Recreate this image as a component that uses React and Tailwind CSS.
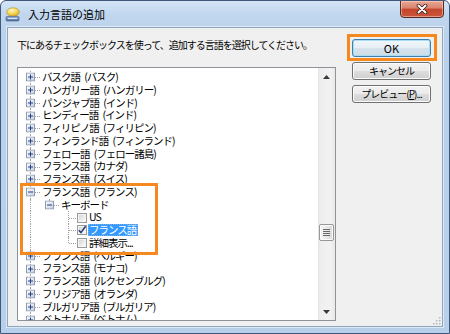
import React from "react";

const rows = [
  { t: "バスク語 (バスク)", cells: [["tee", "+"]] },
  { t: "ハンガリー語 (ハンガリー)", cells: [["tee", "+"]] },
  { t: "パンジャブ語 (インド)", cells: [["tee", "+"]] },
  { t: "ヒンディー語 (インド)", cells: [["tee", "+"]] },
  { t: "フィリピノ語 (フィリピン)", cells: [["tee", "+"]] },
  { t: "フィンランド語 (フィンランド)", cells: [["tee", "+"]] },
  { t: "フェロー語 (フェロー諸島)", cells: [["tee", "+"]] },
  { t: "フランス語 (カナダ)", cells: [["tee", "+"]] },
  { t: "フランス語 (スイス)", cells: [["tee", "+"]] },
  { t: "フランス語 (フランス)", cells: [["tee", "-"]] },
  { t: "キーボード", cells: [["full"], ["ell", "-"]] },
  { t: "US", cells: [["full"], ["none"], ["tee"]], check: false },
  { t: "フランス語", cells: [["full"], ["none"], ["tee"]], check: true, selected: true },
  { t: "詳細表示...", cells: [["full"], ["none"], ["ell"]], check: false },
  { t: "フランス語 (ベルギー)", cells: [["tee", "+"]] },
  { t: "フランス語 (モナコ)", cells: [["tee", "+"]] },
  { t: "フランス語 (ルクセンブルグ)", cells: [["tee", "+"]] },
  { t: "フリジア語 (オランダ)", cells: [["tee", "+"]] },
  { t: "ブルガリア語 (ブルガリア)", cells: [["tee", "+"]] },
  { t: "ベトナム語 (ベトナム)", cells: [["tee", "+"]] },
];

function Expander({ sign }) {
  return (
    <svg width="9" height="9" viewBox="0 0 9 9" className="absolute left-[5px] top-1/2 -translate-y-1/2">
      <defs>
        <linearGradient id="exg" x1="0" y1="0" x2="1" y2="1">
          <stop offset="0" stopColor="#ffffff" />
          <stop offset="1" stopColor="#c4cfdd" />
        </linearGradient>
      </defs>
      <rect x="0.5" y="0.5" width="8" height="8" fill="url(#exg)" stroke="#8d9bb0" />
      <rect x="2" y="4" width="5" height="1" fill="#23418a" />
      {sign === "+" && <rect x="4" y="2" width="1" height="5" fill="#23418a" />}
    </svg>
  );
}

function Cell({ kind, exp }) {
  return (
    <div className="relative w-[19px] h-full shrink-0">
      {(kind === "full" || kind === "tee") && (
        <div className="absolute left-[9px] top-0 bottom-0 border-l border-dotted border-[#a0a0a0]" />
      )}
      {kind === "ell" && (
        <div className="absolute left-[9px] top-0 h-1/2 border-l border-dotted border-[#a0a0a0]" />
      )}
      {(kind === "tee" || kind === "ell") && (
        <div className="absolute left-[10px] right-0 top-1/2 border-t border-dotted border-[#a0a0a0]" />
      )}
      {exp && <Expander sign={exp} />}
    </div>
  );
}

function CheckBox({ checked }) {
  return (
    <svg width="10" height="10" viewBox="0 0 10 10" className="shrink-0 -ml-[1px]">
      <defs>
        <linearGradient id="cbg" x1="0" y1="0" x2="1" y2="1">
          <stop offset="0" stopColor="#d6d6d6" />
          <stop offset="1" stopColor="#fbfbfb" />
        </linearGradient>
      </defs>
      <rect x="0.5" y="0.5" width="9" height="9" fill="#f4f4f4" stroke="#9a9b9b" />
      <rect x="2" y="2" width="6" height="6" fill="url(#cbg)" />
      {checked && (
        <path d="M1.8 5.2 L4 7.6 L8.6 1.2" fill="none" stroke="#253f7e" strokeWidth="1.6" />
      )}
    </svg>
  );
}

function TreeRow({ row }) {
  const hasCheck = row.check !== undefined;
  // en space keeps the gap before the bracket visible under the tight tracking
  const label = row.t.replace(" (", "\u2002(");
  return (
    <div className="flex items-center h-[12.75px] shrink-0 whitespace-nowrap">
      {row.cells.map((c, i) => (
        <Cell key={i} kind={c[0]} exp={c[1]} />
      ))}
      {hasCheck && <CheckBox checked={row.check} />}
      <span
        className={
          row.selected
            ? "ml-[1px] pl-[1px] pr-[2px] h-[12px] flex items-center bg-[#3399ff] text-white outline-1 outline-dotted outline-[#7fb0e0] -outline-offset-1"
            : "ml-[2px] text-black"
        }
      >
        {label}
      </span>
    </div>
  );
}

function Button({ children, primary }) {
  return (
    <div
      className={
        "h-[18px] w-full rounded-[3px] border flex items-center justify-center text-[10px] tracking-[-1px] leading-none text-black " +
        (primary
          ? "border-[#3c7fb1] bg-[linear-gradient(to_bottom,#f1f8fc,#e5eef5_50%,#d6e2ec_51%,#cfdde8)] shadow-[inset_0_0_0_1px_#a8dcf4]"
          : "border-[#707070] bg-[linear-gradient(to_bottom,#f2f2f2,#ebebeb_50%,#dddddd_51%,#cfcfcf)] shadow-[inset_0_0_0_1px_#fcfcfc]")
      }
    >
      {children}
    </div>
  );
}

function Scrollbar() {
  return (
    <div className="w-[17px] h-full flex flex-col shrink-0 bg-[linear-gradient(to_right,#e2e2e2,#eeeeee_2px,#f2f2f2_12px,#e9e9e9)]">
      <div className="h-[17px] flex items-center justify-center">
        <svg width="7" height="4" viewBox="0 0 7 4">
          <path d="M0 4 L3.5 0 L7 4 Z" fill="#3a3a3a" />
        </svg>
      </div>
      <div className="flex-1 flex flex-col items-center">
        <div className="mt-[139px] w-[15px] h-[17px] rounded-[2px] border border-[#979797] bg-[linear-gradient(to_right,#f6f6f6,#e6e6e6_60%,#d8d8d8)] shadow-[inset_0_0_0_1px_#fdfdfd] flex flex-col items-center justify-center gap-[1px]">
          {[0, 1, 2, 3].map((i) => (
            <div key={i} className="w-[7px] h-px bg-[#6b6b6b]" />
          ))}
        </div>
      </div>
      <div className="h-[17px] flex items-center justify-center">
        <svg width="7" height="4" viewBox="0 0 7 4">
          <path d="M0 0 L7 0 L3.5 4 Z" fill="#3a3a3a" />
        </svg>
      </div>
    </div>
  );
}

function TitleIcon() {
  return (
    <svg width="15" height="15" viewBox="0 0 15 15">
      <defs>
        <radialGradient id="bub" cx="0.4" cy="0.3" r="0.8">
          <stop offset="0" stopColor="#fff7c2" />
          <stop offset="0.6" stopColor="#f2cf4a" />
          <stop offset="1" stopColor="#c99a17" />
        </radialGradient>
        <linearGradient id="kb" x1="0" y1="0" x2="0" y2="1">
          <stop offset="0" stopColor="#9db5d6" />
          <stop offset="1" stopColor="#4d6f9f" />
        </linearGradient>
      </defs>
      <ellipse cx="8" cy="5" rx="6.3" ry="4.2" fill="url(#bub)" stroke="#b58a1a" strokeWidth="0.6" />
      <rect x="1" y="9.5" width="13" height="4.5" rx="1" fill="url(#kb)" stroke="#3f5d88" strokeWidth="0.6" />
      <rect x="3" y="11" width="9" height="1" fill="#dce7f5" />
    </svg>
  );
}

export default function App() {
  return (
    <div className="w-[450px] h-[334px] bg-white font-['Noto_Sans_CJK_JP',sans-serif]">
      <div className="relative w-full h-full flex flex-col rounded-t-[6px] border border-[#40597a] bg-[linear-gradient(to_bottom,#d4e4f5,#c0d6ee_14px,#b9d1ea_40px,#b7cfe9)] overflow-hidden">
        {/* title bar */}
        <div className="h-[26px] flex items-center shrink-0">
          <div className="ml-[4px] mt-[1px]">
            <TitleIcon />
          </div>
          <span className="ml-[8px] text-[11px] leading-none text-black">入力言語の追加</span>
          <div className="ml-auto mr-[5px] self-start -mt-[1px] w-[44px] h-[18px] rounded-b-[4px] border border-[#5a2a22] bg-[linear-gradient(to_bottom,#e8a796,#d8826c_45%,#c4452c_50%,#c9563a)] shadow-[inset_0_0_0_1px_rgba(255,220,210,0.5)] flex items-center justify-center">
            <svg width="12" height="10" viewBox="0 0 12 10">
              <path d="M2.5 1.5 L9.5 8.5 M9.5 1.5 L2.5 8.5" stroke="#3a1d17" strokeWidth="3.6" strokeLinecap="round" />
              <path d="M2.5 1.5 L9.5 8.5 M9.5 1.5 L2.5 8.5" stroke="#ffffff" strokeWidth="2" strokeLinecap="round" />
            </svg>
          </div>
        </div>

        {/* client area */}
        <div className="ml-[6px] mr-[6px] h-[300px] shrink-0 border border-[#8fa5bf] shadow-[0_0_0_1px_rgba(235,243,252,0.7)] bg-[#f0f0f0] flex relative">
          <div className="pl-[9px] pt-[10px] flex flex-col">
            <div className="h-[14px] flex items-center text-[10px] tracking-[-1px] leading-none text-black whitespace-nowrap">
              下にあるチェックボックスを使って、追加する言語を選択してください。
            </div>
            <div className="mt-[15px] w-[319px] h-[254px] border border-[#8f9399] bg-white flex">
              <div className="flex-1 pl-[3px] pt-[3px] overflow-hidden flex flex-col text-[10.5px] tracking-[-1px] leading-none">
                {rows.map((r, i) => (
                  <TreeRow key={i} row={r} />
                ))}
              </div>
              <Scrollbar />
            </div>
          </div>

          <div className="ml-[16px] pt-[11px] w-[79px] flex flex-col gap-[5px]">
            <Button primary>
              <span className="text-[11px] tracking-normal">OK</span>
            </Button>
            <Button>キャンセル</Button>
            <Button>
              プレビュー(<span className="underline">P</span>)...
            </Button>
          </div>

          <svg width="8" height="8" viewBox="0 0 8 8" className="absolute right-[1px] bottom-[1px]">
            {[[6, 0], [3, 3], [6, 3], [0, 6], [3, 6], [6, 6]].map(([x, y], i) => (
              <rect key={i} x={x} y={y} width="1.5" height="1.5" fill="#b0b7c2" />
            ))}
          </svg>
        </div>

        {/* annotation boxes */}
        <div className="absolute left-[346px] top-[33px] w-[90px] h-[27px] border-[3px] border-[#f5891f]" />
        <div className="absolute left-[19px] top-[182px] w-[138px] h-[72px] border-[3px] border-[#f5891f]" />
      </div>
    </div>
  );
}
